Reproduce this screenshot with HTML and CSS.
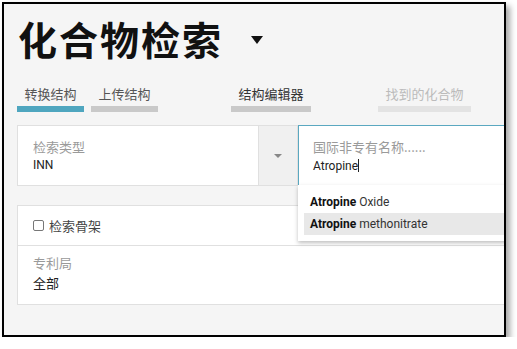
FILE: index.html
```html
<!DOCTYPE html>
<html lang="zh">
<head>
    <meta charset="UTF-8">
    <meta name="viewport" content="width=device-width, initial-scale=1.0">
    <title>化合物检索</title>
    <link rel="stylesheet" href="styles.css">
</head>
<body>
    <div class="frame">
        <div class="head">
            <h1>化合物检索</h1>
            <span class="caret"></span>
        </div>

        <div class="tabs">
            <div class="tab tab1 active">转换结构</div>
            <div class="tab tab2">上传结构</div>
            <div class="tab tab3">结构编辑器</div>
            <div class="tab tab4 disabled">找到的化合物</div>
        </div>

        <div class="search-row">
            <div class="type-field">
                <div class="label">检索类型</div>
                <div class="value">INN</div>
            </div>
            <div class="type-btn"><span class="tri"></span></div>
            <div class="name-field">
                <div class="label">国际非专有名称......</div>
                <div class="value">Atropine<span class="cursor"></span></div>
                <ul class="suggest">
                    <li><b>Atropine</b> Oxide</li>
                    <li class="hover"><b>Atropine</b> methonitrate</li>
                </ul>
            </div>
        </div>

        <div class="options">
            <div class="check"><span class="box"></span>检索骨架</div>
            <div class="office">
                <div class="label">专利局</div>
                <div class="value">全部</div>
            </div>
        </div>
    </div>
</body>
</html>
```

FILE: styles.css
```css
body{
    margin: 0;
    background: #fff;
    font-family: Roboto, "Noto Sans CJK SC", sans-serif;
}
.frame{
    margin: 2px 0 0 2px;
    width: 504px;
    height: 335px;
    box-sizing: border-box;
    border: 2px solid #000;
    background: #f5f5f5;
    overflow: hidden;
    padding: 0 0 0 13px;
    box-shadow: 4px 4px 6px rgba(0, 0, 0, 0.35);
}
/* title */
.head{
    display: flex;
    align-items: center;
    margin-top: 12px;
    height: 44px;
}
.head h1{
    margin: 0;
    font-family: "Noto Sans CJK SC", sans-serif;
    font-size: 39px;
    line-height: 44px;
    font-weight: 700;
    letter-spacing: 2px;
    color: #111;
    padding-left: 1px;
}
.caret{
    margin-left: 28px;
    margin-top: 4px;
    width: 0;
    height: 0;
    border-left: 6px solid transparent;
    border-right: 6px solid transparent;
    border-top: 8px solid #111;
}
/* tabs */
.tabs{
    display: flex;
    margin-top: 26px;
}
.tab{
    font-family: "Noto Sans CJK SC", sans-serif;
    font-size: 13px;
    line-height: 16px;
    color: #555;
    text-align: center;
    padding-bottom: 4px;
    border-bottom: 6px solid #c9c9c9;
}
.tab1{ width: 67px; }
.tab2{ width: 67px; margin-left: 7px; }
.tab3{ width: 80px; margin-left: 73px; color: #333; }
.tab4{ width: 93px; margin-left: 67px; }
.tab.active{
    border-bottom-color: #4fa6bf;
}
.tab.disabled{
    color: #bbb;
    border-bottom-color: #e3e3e3;
}
/* search row */
.search-row{
    display: flex;
    margin-top: 13px;
    margin-right: -40px;
    height: 61px;
}
.label{
    font-family: "Noto Sans CJK SC", sans-serif;
    font-size: 13px;
    line-height: 18px;
    color: #9a9a9a;
}
.value{
    font-family: Roboto, "Noto Sans CJK SC", sans-serif;
    font-size: 12px;
    line-height: 18px;
    color: #222;
}
.type-field{
    width: 241px;
    box-sizing: border-box;
    background: #fff;
    border: 1px solid #e0e0e0;
    border-right: none;
    padding: 12px 0 0 15px;
}
.type-btn{
    width: 38px;
    background: #f0f0f0;
    border: 1px solid #e0e0e0;
    display: flex;
    align-items: center;
    justify-content: center;
}
.tri{
    width: 0;
    height: 0;
    border-left: 4px solid transparent;
    border-right: 4px solid transparent;
    border-top: 4px solid #888;
}
.name-field{
    position: relative;
    flex: 1;
    background: #fff;
    border: 1.5px solid #5aa8c0;
    padding: 12px 0 0 14px;
}
.name-field .value{
    margin-top: 1px;
}
.cursor{
    display: inline-block;
    width: 1px;
    height: 13px;
    background: #222;
    vertical-align: -2px;
}
.suggest{
    position: absolute;
    z-index: 2;
    top: 100%;
    left: -1px;
    right: 0;
    margin: 0;
    padding: 6px 0 6px 6px;
    list-style: none;
    background: #fff;
    box-shadow: 0 2px 4px rgba(0, 0, 0, 0.25);
}
.suggest li{
    font-size: 12px;
    line-height: 22px;
    color: #333;
    padding-left: 6px;
}
.suggest li b{
    color: #111;
}
.suggest li.hover{
    background: #e8e8e8;
}
/* options */
.options{
    margin-top: 19px;
    margin-right: -40px;
    background: #fff;
    border: 1px solid #e0e0e0;
}
.check{
    display: flex;
    align-items: center;
    height: 39px;
    padding-left: 15px;
    border-bottom: 1px solid #e0e0e0;
    font-family: "Noto Sans CJK SC", sans-serif;
    font-size: 13px;
    color: #444;
}
.box{
    width: 9px;
    height: 9px;
    border: 1px solid #777;
    border-radius: 2px;
    margin-right: 5px;
}
.office{
    height: 58px;
    box-sizing: border-box;
    padding: 8px 0 0 15px;
}
.office .value{
    font-family: "Noto Sans CJK SC", sans-serif;
    font-size: 13px;
    margin-top: 2px;
}
```
